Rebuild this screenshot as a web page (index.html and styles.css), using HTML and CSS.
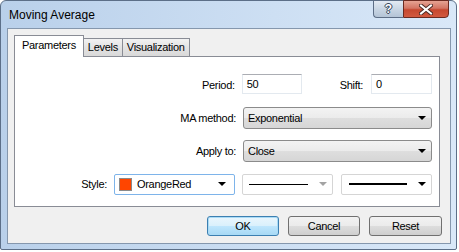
FILE: index.html
```html
<!DOCTYPE html>
<html lang="en">

<head>
    <meta charset="UTF-8">
    <title>Moving Average</title>
    <link rel="stylesheet" href="styles.css">
</head>

<body>
    <div class="window">
        <div class="titlebar">
            <span class="title">Moving Average</span>
            <div class="caption-buttons">
                <button class="cap help">?</button>
                <button class="cap close">
                    <svg width="14" height="11" viewBox="0 0 14 11">
                        <path d="M2 1.5 L12 9.5 M12 1.5 L2 9.5" stroke="#4b2a24" stroke-width="4" stroke-linecap="square"/>
                        <path d="M2 1.5 L12 9.5 M12 1.5 L2 9.5" stroke="#ffffff" stroke-width="2" stroke-linecap="square"/>
                    </svg>
                </button>
            </div>
        </div>

        <div class="client">
            <div class="tabs">
                <div class="tab active">Parameters</div>
                <div class="tab">Levels</div>
                <div class="tab">Visualization</div>
            </div>

            <div class="panel">
                <div class="row">
                    <label>Period:</label>
                    <div class="edit edit-period">50</div>
                    <label class="shift-label">Shift:</label>
                    <div class="edit edit-shift">0</div>
                </div>
                <div class="row">
                    <label>MA method:</label>
                    <div class="combo">
                        <span>Exponential</span>
                        <i class="arrow"></i>
                    </div>
                </div>
                <div class="row">
                    <label>Apply to:</label>
                    <div class="combo">
                        <span>Close</span>
                        <i class="arrow"></i>
                    </div>
                </div>
                <div class="row">
                    <label>Style:</label>
                    <div class="color-combo">
                        <span class="swatch"></span>
                        <span>OrangeRed</span>
                        <i class="arrow"></i>
                    </div>
                    <div class="line-combo">
                        <span class="line thin"></span>
                        <i class="arrow disabled"></i>
                    </div>
                    <div class="line-combo">
                        <span class="line thick"></span>
                        <i class="arrow"></i>
                    </div>
                </div>
            </div>

            <div class="buttons">
                <button class="btn default">OK</button>
                <button class="btn">Cancel</button>
                <button class="btn reset">Reset</button>
            </div>
        </div>
    </div>
</body>

</html>
```

FILE: styles.css
```css
body {
    margin: 0;
    background: #ffffff;
    font-family: 'Liberation Sans', Arial, sans-serif;
    font-size: 11px;
    letter-spacing: -0.3px;
    color: #000;
}

/* window frame */
.window {
    width: 455px;
    height: 248px;
    border: 1px solid #5c6f88;
    border-radius: 6px 6px 2px 2px;
    background: linear-gradient(to right, #b9d0ea, #cddff3 60%, #d9e8f8);
    display: flex;
    flex-direction: column;
}

.titlebar {
    height: 27px;
    flex-shrink: 0;
    display: flex;
    align-items: flex-start;
    padding: 0 7px 0 8px;
}

.title {
    font-size: 12px;
    line-height: 14px;
    letter-spacing: 0;
    padding-top: 7px;
    color: #000;
}

.caption-buttons {
    margin-left: auto;
    margin-top: -1px;
    display: flex;
}

.cap {
    height: 18px;
    border: 1px solid #5d6e86;
    padding: 0;
    margin: 0;
    display: flex;
    align-items: center;
    justify-content: center;
}

.help {
    width: 30px;
    border-right: none;
    border-radius: 0 0 0 4px;
    background: linear-gradient(to bottom, #e3eaf3, #c9d6e4 50%, #b4c4d6);
    color: #fff;
    font-family: 'Liberation Sans', Arial, sans-serif;
    font-weight: bold;
    font-size: 12px;
    text-shadow: 0 0 1px #36465b, 1px 0 0 #36465b, -1px 0 0 #36465b, 0 1px 0 #36465b, 0 -1px 0 #36465b;
}

.close {
    width: 46px;
    border-color: #6b2a20;
    border-radius: 0 0 4px 0;
    background: linear-gradient(to bottom, #e6a393, #d37563 45%, #c6482f 55%, #d2593f);
}

/* client area */
.client {
    margin: 0 5px 5px 6px;
    flex: 1;
    min-height: 0;
    border: 1px solid #8597ad;
    background: #f0f0f0;
    padding: 7px 8px 0 6px;
    display: flex;
    flex-direction: column;
}

.tabs {
    display: flex;
    height: 20px;
    flex-shrink: 0;
    align-items: flex-end;
    margin-right: 2px;
}

.tab {
    height: 17px;
    line-height: 17px;
    padding: 0 4px;
    border: 1px solid #898c95;
    border-bottom: none;
    margin-left: -1px;
    background: linear-gradient(to bottom, #f2f2f2, #e3e3e3 50%, #d9d9d9);
}

.tab.active {
    height: 21px;
    line-height: 19px;
    margin-left: 0;
    margin-bottom: -1px;
    padding: 0 7px;
    background: #ffffff;
    position: relative;
    z-index: 1;
}

.tab.active + .tab {
    margin-left: 0;
    border-left: none;
}

.panel {
    height: 151px;
    box-sizing: border-box;
    flex-shrink: 0;
    margin-right: 2px;
    border: 1px solid #898c95;
    background: #ffffff;
    padding: 17px 7px 0 0;
    display: flex;
    flex-direction: column;
    gap: 11px;
}

.row {
    height: 22px;
    flex-shrink: 0;
    display: flex;
    align-items: center;
    justify-content: flex-end;
}

.row label {
    margin-right: 7px;
    padding-bottom: 1px;
}

.edit {
    height: 18px;
    line-height: 18px;
    border: 1px solid #e3e9ef;
    border-top-color: #abadb3;
    padding-left: 4px;
    box-sizing: content-box;
}

.edit-period {
    width: 54px;
    margin-right: 38px;
    align-self: flex-start;
}

.edit-shift {
    width: 55px;
    align-self: flex-start;
}

.row .shift-label {
    margin-right: 8px;
}

.combo {
    width: 189px;
    height: 22px;
    box-sizing: border-box;
    border: 1px solid #8b8b8b;
    border-radius: 3px;
    background: linear-gradient(to bottom, #f3f3f3, #ebebeb 50%, #dedede 51%, #d6d6d6);
    display: flex;
    align-items: center;
    padding: 0 5px 0 4px;
}

.arrow {
    margin-left: auto;
    width: 0;
    height: 0;
    border-left: 4px solid transparent;
    border-right: 4px solid transparent;
    border-top: 4px solid #000;
}

.arrow.disabled {
    border-top-color: #a3a3a3;
}

.color-combo {
    width: 121px;
    height: 21px;
    box-sizing: border-box;
    margin-right: 7px;
    border: 1px solid #7eb4ea;
    border-radius: 2px;
    background: #fff;
    display: flex;
    align-items: center;
    padding: 0 8px 0 4px;
}

.swatch {
    width: 11px;
    height: 11px;
    background: #ff4500;
    border: 1px solid #8a8a8a;
    margin-right: 5px;
}

.line-combo {
    width: 91px;
    height: 21px;
    box-sizing: border-box;
    border: 1px solid #d5d5d5;
    border-radius: 2px;
    background: #fff;
    display: flex;
    align-items: center;
    padding: 0 5px 0 6px;
}

.line-combo + .line-combo {
    margin-left: 8px;
}

.line {
    width: 59px;
    background: #000;
}

.line.thin {
    height: 1px;
}

.line.thick {
    height: 2px;
    margin-left: 1px;
    width: 58px;
}

/* bottom buttons */
.buttons {
    margin-top: 9px;
    display: flex;
    justify-content: flex-end;
    gap: 9px;
}

.btn {
    width: 72px;
    height: 20px;
    margin: 0;
    padding: 0;
    border: 1px solid #707070;
    border-radius: 3px;
    background: linear-gradient(to bottom, #f2f2f2, #ebebeb 50%, #dddddd 51%, #cfcfcf);
    font-family: 'Liberation Sans', Arial, sans-serif;
    font-size: 11px;
    letter-spacing: -0.3px;
    color: #000;
}

.btn.default {
    border-color: #3c7fb1;
    background: linear-gradient(to bottom, #eaf6fd, #d9f0fc 50%, #bee6fd 51%, #a7d9f5);
    box-shadow: inset 0 0 0 1px #a9dbf6;
}

.btn.reset {
    width: 73px;
}
```
